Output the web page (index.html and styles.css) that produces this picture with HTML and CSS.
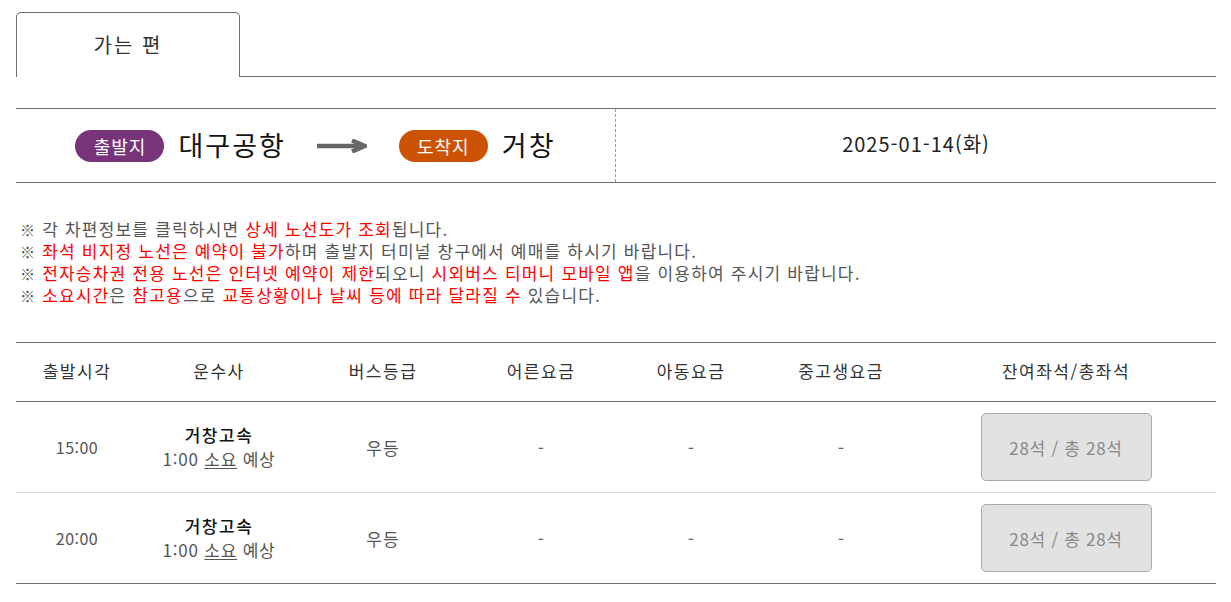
FILE: index.html
```html
<!DOCTYPE html>
<html lang="ko">
<head>
<meta charset="utf-8">
<title>가는 편</title>
<link rel="stylesheet" href="styles.css">
</head>
<body>
<div class="wrap">
  <div class="tabs">
    <div class="tab">가는 편</div>
  </div>

  <div class="route">
    <div class="route-left">
      <span class="badge badge-dep">출발지</span>
      <span class="place">대구공항</span>
      <svg class="arrow" width="50" height="14" viewBox="0 0 50 14">
        <path d="M0 7 H42" stroke="#666" stroke-width="4.5" fill="none"/>
        <path d="M35 1.5 L48 7 L35 12.5" stroke="#666" stroke-width="4.5" fill="none" stroke-linejoin="miter"/>
      </svg>
      <span class="badge badge-arr">도착지</span>
      <span class="place">거창</span>
    </div>
    <div class="route-right">2025-01-14(화)</div>
  </div>

  <ul class="notice">
    <li><span class="mark">※</span> 각 차편정보를 클릭하시면 <em>상세 노선도가 조회</em>됩니다.</li>
    <li><span class="mark">※</span> <em>좌석 비지정 노선은 예약이 불가</em>하며 출발지 터미널 창구에서 예매를 하시기 바랍니다.</li>
    <li><span class="mark">※</span> <em>전자승차권 전용 노선은 인터넷 예약이 제한</em>되오니 <em>시외버스 티머니 모바일 앱</em>을 이용하여 주시기 바랍니다.</li>
    <li><span class="mark">※</span> <em>소요시간</em>은 <em>참고용</em>으로 <em>교통상황이나 날씨 등에 따라 달라질 수</em> 있습니다.</li>
  </ul>

  <div class="table">
    <div class="row head">
      <div>출발시각</div>
      <div>운수사</div>
      <div>버스등급</div>
      <div>어른요금</div>
      <div>아동요금</div>
      <div>중고생요금</div>
      <div>잔여좌석/총좌석</div>
    </div>
    <div class="row body">
      <div class="time">15:00</div>
      <div class="company"><strong>거창고속</strong><span>1:00 <u>소요</u> 예상</span></div>
      <div class="grade">우등</div>
      <div class="dash">-</div>
      <div class="dash">-</div>
      <div class="dash">-</div>
      <div><button class="seat" type="button">28석 / 총 28석</button></div>
    </div>
    <div class="row body last">
      <div class="time">20:00</div>
      <div class="company"><strong>거창고속</strong><span>1:00 <u>소요</u> 예상</span></div>
      <div class="grade">우등</div>
      <div class="dash">-</div>
      <div class="dash">-</div>
      <div class="dash">-</div>
      <div><button class="seat" type="button">28석 / 총 28석</button></div>
    </div>
  </div>
</div>
</body>
</html>
```

FILE: styles.css
```css
* { box-sizing: border-box; }

body {
  margin: 0;
  padding-top: 12px;
  background: #fff;
  font-family: "Noto Sans CJK KR", "Noto Sans", sans-serif;
  color: #333;
}

.wrap {
  width: 1200px;
  margin-left: 16px;
}

.tabs {
  height: 65px;
  border-bottom: 1px solid #6e6e6e;
  display: flex;
}

.tab {
  width: 224px;
  height: 65px;
  border: 1px solid #6e6e6e;
  border-bottom: none;
  border-radius: 5px 5px 0 0;
  background: #fff;
  display: flex;
  align-items: center;
  justify-content: center;
  font-size: 20px;
  letter-spacing: 2px;
  color: #333;
  padding-bottom: 2px;
}

.route {
  margin-top: 31px;
  height: 75px;
  border-top: 1px solid #6e6e6e;
  border-bottom: 1px solid #6e6e6e;
  display: flex;
}

.route-left {
  width: 600px;
  border-right: 1px dashed #999;
  display: flex;
  align-items: center;
  justify-content: center;
}

.badge {
  display: inline-flex;
  align-items: center;
  justify-content: center;
  width: 89px;
  height: 32px;
  border-radius: 16px;
  color: #fff;
  font-size: 18px;
  letter-spacing: 1px;
  line-height: 1;
}

.badge-dep { background: #773478; }
.badge-arr { background: #cc5204; }

.place {
  font-size: 27px;
  letter-spacing: 2px;
  color: #111;
  margin-left: 14px;
  line-height: 1;
  padding-bottom: 2px;
}

.arrow {
  margin: 0 32px 0 31px;
}

.route-right {
  flex: 1;
  display: flex;
  align-items: center;
  justify-content: center;
  font-size: 20px;
  color: #222;
  letter-spacing: 1px;
  padding-bottom: 4px;
}

.notice {
  list-style: none;
  margin: 35px 0 0;
  padding: 0 0 0 4px;
  font-size: 17px;
  line-height: 21px;
  color: #555;
  letter-spacing: 1.2px;
}

.notice em {
  font-style: normal;
  color: #f00;
}

.mark {
  color: #555;
  font-size: 15px;
  font-weight: 700;
}

.table {
  margin-top: 36px;
  border-top: 1px solid #6e6e6e;
}

.row {
  display: grid;
  grid-template-columns: 122px 162px 166px 150px 150px 150px 300px;
  align-items: center;
  text-align: center;
}

.row > div {
  display: flex;
  flex-direction: column;
  align-items: center;
  justify-content: center;
}

.head {
  height: 59px;
  border-bottom: 1px solid #6e6e6e;
  font-size: 17px;
  letter-spacing: 1.5px;
  color: #333;
  padding-bottom: 3px;
}

.body {
  height: 91px;
  border-bottom: 1px solid #ddd;
  font-size: 16px;
  color: #555;
}

.body.last {
  border-bottom: 1px solid #6e6e6e;
}

.time {
  font-size: 16px;
  letter-spacing: 0.5px;
}

.grade {
  font-size: 17px;
  letter-spacing: 1px;
}

.company strong {
  font-weight: 500;
  color: #111;
  font-size: 17px;
  letter-spacing: 1.5px;
  line-height: 24px;
}

.company span {
  font-size: 17px;
  letter-spacing: 0.8px;
  line-height: 24px;
  color: #555;
}

.company u {
  text-decoration: underline;
  text-underline-offset: 2px;
}

.dash {
  color: #666;
  font-size: 18px;
}

.seat {
  width: 171px;
  height: 68px;
  border: 1px solid #aaa;
  border-radius: 5px;
  background: #e2e2e2;
  color: #888;
  font-family: "Noto Sans CJK KR", "Noto Sans", sans-serif;
  font-size: 17px;
  letter-spacing: 0.7px;
  padding: 0;
}
```
